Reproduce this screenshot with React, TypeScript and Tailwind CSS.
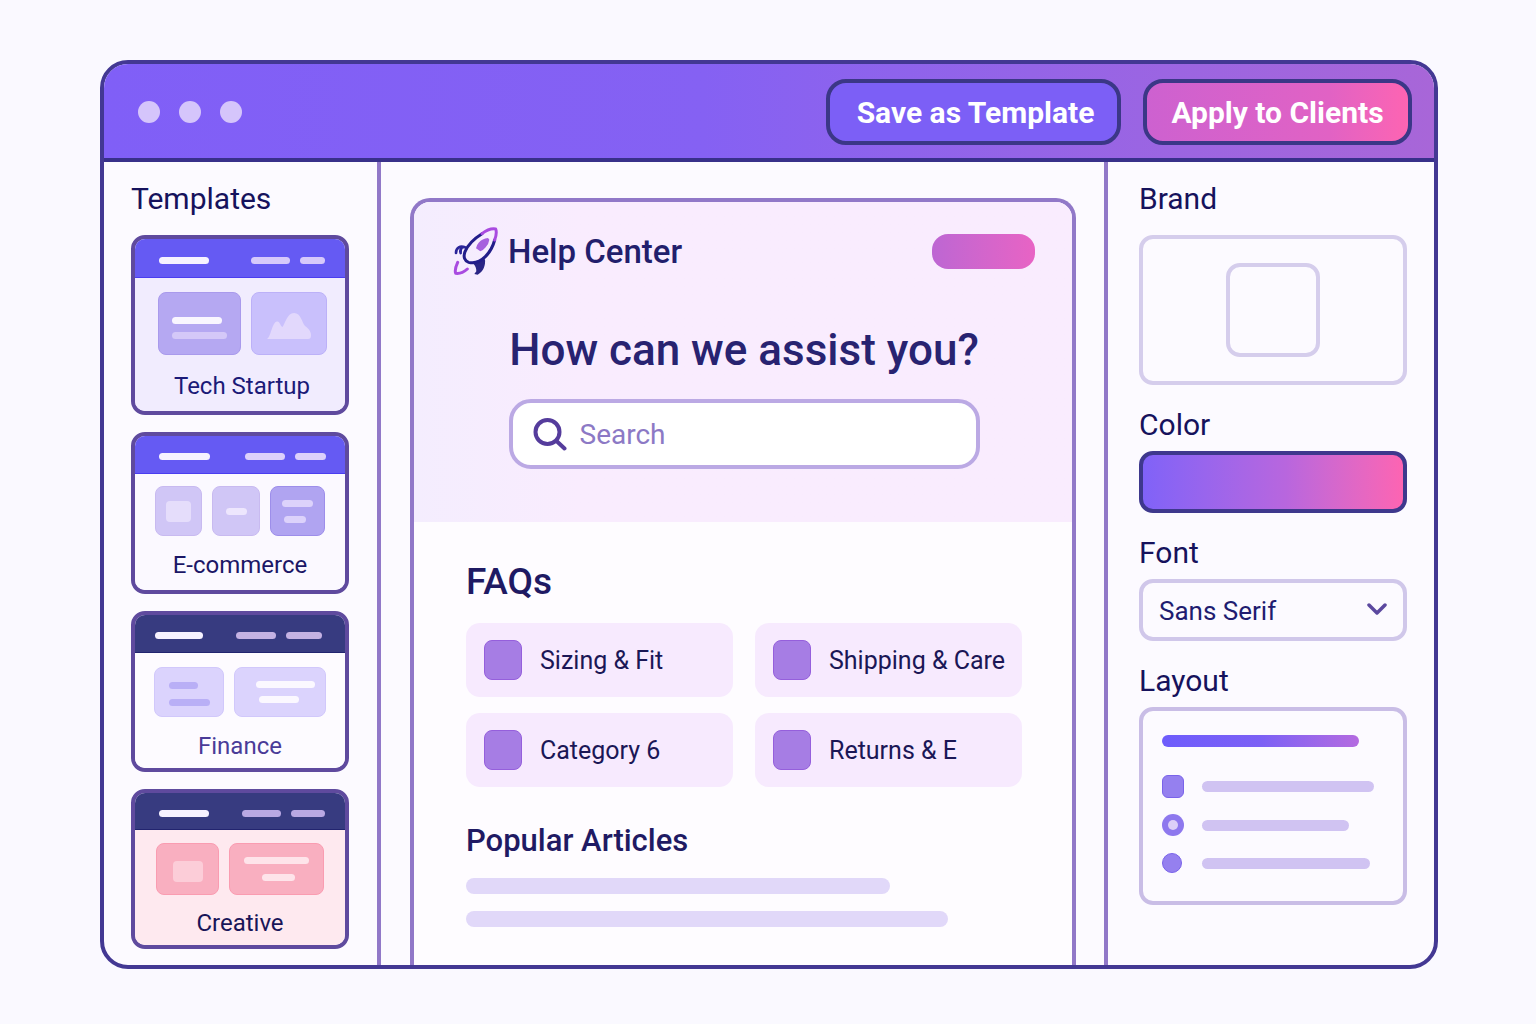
import type { ReactNode } from 'react'
import clsx from 'clsx'

interface Template {
  name: string
  header: string
  body: string
  label: string
  bars: string[]
  barColor: string
  preview: ReactNode
}

function Block({ className, children }: { className: string; children?: ReactNode }) {
  return (
    <span className={clsx('flex flex-col justify-center rounded-lg border', className)}>
      {children}
    </span>
  )
}

function Line({ className }: { className: string }) {
  return <span className={clsx('block h-[7px] rounded-full', className)} />
}

const TEMPLATES: Template[] = [
  {
    name: 'Tech Startup',
    header: 'h-[39px] bg-[#655af3] border-[#4a3df0] pl-6 pr-5',
    body: 'h-[133px] bg-[#f1ecfe] pt-[14px] pl-1',
    label: 'mt-[15px] text-[#1b1a78]',
    bars: ['w-[50px]', 'w-[39px]', 'w-[25px]'],
    barColor: 'bg-[#d6c9fb]',
    preview: (
      <>
        <Block className="h-[63px] w-[83px] gap-2 border-[#a99aec] bg-[#b5a8f2] pl-[13px] pt-2">
          <Line className="w-[50px] bg-[#f9f6ff]" />
          <Line className="w-[55px] bg-[#d4c8f8]" />
        </Block>
        <Block className="h-[63px] w-[76px] items-center border-[#bcb1f8] bg-[#c9c0fc]">
          <svg width="46" height="28" viewBox="0 0 46 28" className="mt-1">
            <path
              d="M1 27C5 25 6 10 11 9.500C14 9 14 14 16.500 15C19 12 21 1 28 1C35 1 36 11 39 14C42 16 45 19 45 23C45 26 44 27 42 27Z"
              fill="#e2d8fc"
            />
          </svg>
        </Block>
      </>
    )
  },
  {
    name: 'E-commerce',
    header: 'h-[38px] bg-[#655af3] border-[#4a3df0] pl-6 pr-[19px]',
    body: 'h-[116px] bg-[#fbf9ff] pt-3',
    label: 'mt-[13px] text-[#1b1766]',
    bars: ['w-[51px]', 'w-[40px]', 'w-[31px]'],
    barColor: 'bg-[#dcd0fb]',
    preview: (
      <>
        <Block className="h-[50px] w-[47px] items-center border-[#c8baf0] bg-[#d0c6f6]">
          <span className="h-[21px] w-[25px] rounded bg-[#e5ddfb]" />
        </Block>
        <Block className="h-[50px] w-[48px] items-center border-[#c8baf0] bg-[#d0c6f6]">
          <Line className="w-[21px] bg-[#ede6fd]" />
        </Block>
        <Block className="h-[50px] w-[55px] gap-[9px] border-[#9d8eea] bg-[#b0a4f1] pl-[11px]">
          <Line className="w-[31px] bg-[#dcd2fb]" />
          <Line className="ml-[2px] w-[22px] bg-[#dcd2fb]" />
        </Block>
      </>
    )
  },
  {
    name: 'Finance',
    header: 'h-[38px] bg-[#373b80] border-[#22246f] pl-5 pr-[23px]',
    body: 'h-[115px] bg-[#fdfbff] pt-[14px]',
    label: 'mt-[13px] text-[#4a3b98]',
    bars: ['w-[48px]', 'w-[40px]', 'w-[36px]'],
    barColor: 'bg-[#c4b2e3]',
    preview: (
      <>
        <Block className="h-[50px] w-[70px] gap-[10px] border-[#d1c8fb] bg-[#dbd3fd] pl-[14px] pt-1">
          <Line className="w-[29px] bg-[#b9aff6]" />
          <Line className="w-[41px] bg-[#b9aff6]" />
        </Block>
        <Block className="h-[50px] w-[92px] gap-2 border-[#d1c8fb] bg-[#dbd3fd] pl-[21px]">
          <Line className="w-[59px] bg-[#fbf8ff]" />
          <Line className="ml-[3px] w-[40px] bg-[#fbf8ff]" />
        </Block>
      </>
    )
  },
  {
    name: 'Creative',
    header: 'h-[37px] bg-[#373b80] border-[#22246f] pl-6 pr-5',
    body: 'h-[115px] bg-[#fee9ef] pt-[13px]',
    label: 'mt-3 text-[#191558]',
    bars: ['w-[50px]', 'w-[39px]', 'w-[34px]'],
    barColor: 'bg-[#b9a8e3]',
    preview: (
      <>
        <Block className="h-[52px] w-[63px] items-center border-[#fa9cb1] bg-[#f9afc0]">
          <span className="mt-1 h-[21px] w-[30px] rounded-sm bg-[#fccdd8]" />
        </Block>
        <Block className="h-[52px] w-[95px] items-center gap-[10px] border-[#fa9cb1] bg-[#f9afc0]">
          <Line className="w-[65px] bg-[#fee4ea]" />
          <Line className="ml-1 w-[33px] bg-[#fee4ea]" />
        </Block>
      </>
    )
  }
]

const FAQS = ['Sizing & Fit', 'Shipping & Care', 'Category 6', 'Returns & E']

function TemplateCard({ template }: { template: Template }) {
  return (
    <button
      type="button"
      className="block w-full overflow-hidden rounded-[14px] border-4 border-[#5f4a9e]"
    >
      <span className={clsx('flex items-center border-b pt-1', template.header)}>
        <Line className={clsx('mr-auto bg-[#f6f2ff]', template.bars[0])} />
        <Line className={clsx('mr-[10px]', template.bars[1], template.barColor)} />
        <Line className={clsx(template.bars[2], template.barColor)} />
      </span>
      <span className={clsx('block', template.body)}>
        <span className="flex justify-center gap-[10px]">{template.preview}</span>
        <span className={clsx('block text-[24px] leading-8', template.label)}>{template.name}</span>
      </span>
    </button>
  )
}

function RocketIcon() {
  return (
    <svg
      width="45"
      height="49"
      viewBox="159 111 135 147"
      fill="none"
      strokeWidth="9"
      strokeLinecap="round"
      strokeLinejoin="round"
    >
      <path d="M173 217C167 230 164 242 167 250C180 252 192 246 202 237" stroke="#a94be0" />
      <path d="M168 189C168 172 181 166 195 172M186 172C181 178 180 184 182 189" stroke="#2b259a" strokeWidth="8" />
      <path d="M221 222L255 207C257 226 251 244 233 254L223 252L229 244C229 235 227 229 221 222Z" fill="#2a2585" />
      <path
        d="M246 131C222 146 203 165 195 185C189 201 194 213 206 217C222 221 241 215 256 200C269 187 279 169 284 150"
        stroke="#221d8a"
      />
      <path d="M246 131C260 120 275 115 287 117C291 127 288 139 284 150" stroke="#a94be0" />
      <path
        d="M236 158Q247 146 264 144L268 149Q266 163 257 172Q249 182 241 184L228 175Q230 164 236 158Z"
        fill="#a660de"
      />
    </svg>
  )
}

function SearchIcon() {
  return (
    <svg width="34" height="34" viewBox="0 0 34 34" fill="none" stroke="#553c9c" strokeWidth="4" strokeLinecap="round">
      <circle cx="14.500" cy="14" r="12" />
      <path d="M23.500 23L31.500 30.500" />
    </svg>
  )
}

function TitleBar() {
  return (
    <header className="flex h-[98px] items-center border-b-4 border-[#38308a] bg-linear-to-r from-[#805ff7] via-[#8561f3] via-45% to-[#a866d8] pl-[34px] pr-[22px] pt-[2px]">
      <div className="mr-auto flex gap-[19px]">
        <span className="size-[22px] rounded-full bg-[#d5c5fb]" />
        <span className="size-[22px] rounded-full bg-[#d5c5fb]" />
        <span className="size-[22px] rounded-full bg-[#d5c5fb]" />
      </div>
      <div className="flex gap-[22px] text-[30px] font-bold text-white">
        <button
          type="button"
          className="h-[66px] w-[295px] rounded-[20px] border-4 border-[#3b3787] bg-[#7c5ff6] pl-1 whitespace-nowrap"
        >
          Save as Template
        </button>
        <button
          type="button"
          className="h-[66px] w-[269px] rounded-[20px] border-4 border-[#3b3787] bg-linear-to-r from-[#cd61d0] via-[#e162c4] via-70% to-[#fd64b2] whitespace-nowrap"
        >
          Apply to Clients
        </button>
      </div>
    </header>
  )
}

function HelpCenterPreview() {
  return (
    <section className="flex flex-1 flex-col overflow-hidden rounded-t-[20px] border-4 border-b-0 border-[#9178c8] bg-[#fefcff]">
      <div className="bg-linear-to-r from-[#f4edfe] via-[#f9ecfe] via-25% to-[#f9ecfe] pb-[53px] pl-[39px] pr-[37px] pt-[25px]">
        <div className="flex h-[49px] items-center">
          <RocketIcon />
          <span className="ml-[10px] text-[33px] leading-none font-medium text-[#221e6c]">Help Center</span>
          <span className="ml-auto h-[35px] w-[103px] rounded-[16px] bg-linear-to-r from-[#bd66d3] to-[#e863c4]" />
        </div>
        <div className="mx-auto mt-[46px] max-w-[471px]">
          <h1 className="text-center text-[44px] leading-[56px] font-medium whitespace-nowrap text-[#282371]">
            How can we assist you?
          </h1>
          <label className="mt-[21px] flex h-[70px] items-center gap-[13px] rounded-[22px] border-4 border-[#bba9e4] bg-white px-5 pt-[2px]">
            <SearchIcon />
            <input
              type="search"
              aria-label="Search"
              placeholder="Search"
              className="min-w-0 flex-1 bg-transparent text-[28px] text-[#282371] outline-none placeholder:text-[#8c79c5]"
            />
          </label>
        </div>
      </div>

      <div className="pl-[52px] pr-[50px] pt-[38px]">
        <h2 className="text-[37px] leading-[44px] font-medium text-[#1f1a63]">FAQs</h2>
        <div className="mt-[19px] grid grid-cols-2 gap-x-[22px] gap-y-4">
          {FAQS.map((faq) => (
            <a
              key={faq}
              href="#"
              className="flex h-[74px] items-center gap-[18px] rounded-[14px] bg-[#f7eafe] pl-[18px] text-[25px] whitespace-nowrap text-[#1b1756]"
            >
              <span className="h-10 w-[38px] shrink-0 rounded-lg border border-[#955fdc] bg-[#a67de4]" />
              <span className="pt-[2px]">{faq}</span>
            </a>
          ))}
        </div>
        <h2 className="mt-[34px] text-[31px] leading-10 font-medium text-[#1f1a63]">Popular Articles</h2>
        <div className="mt-[17px] h-4 w-[424px] max-w-full rounded-full bg-[#e1d8f9]" />
        <div className="mt-[17px] h-4 w-[482px] max-w-full rounded-full bg-[#e1d8f9]" />
      </div>
    </section>
  )
}

const HEADING = 'text-[30px] leading-9 text-[#16125c]'

function SettingsPanel() {
  return (
    <aside className="w-[330px] shrink-0 border-l-4 border-[#9178c8] pl-[31px] pr-[27px] pt-[19px]">
      <h2 className={HEADING}>Brand</h2>
      <div className="mt-[18px] flex h-[150px] items-center justify-center rounded-[14px] border-4 border-[#d5cdec]">
        <div className="size-[94px] rounded-[14px] border-4 border-[#d5cdec]" />
      </div>

      <h2 className={clsx(HEADING, 'mt-[22px]')}>Color</h2>
      <button
        type="button"
        aria-label="Color"
        className="mt-2 block h-[62px] w-full rounded-[14px] border-4 border-[#3e388d] bg-linear-to-r from-[#8062f8] via-[#b866de] via-55% to-[#fd64b2]"
      />

      <label htmlFor="font" className={clsx(HEADING, 'mt-[22px] block')}>
        Font
      </label>
      <div className="relative mt-2">
        <select
          id="font"
          className="h-[62px] w-full appearance-none rounded-[14px] border-4 border-[#d0c7ea] bg-transparent px-4 pt-[2px] text-[26px] text-[#211c70]"
        >
          <option>Sans Serif</option>
        </select>
        <svg
          width="20"
          height="13"
          viewBox="0 0 20 13"
          fill="none"
          stroke="#5b489f"
          strokeWidth="3.500"
          strokeLinecap="round"
          strokeLinejoin="round"
          className="pointer-events-none absolute right-5 top-6"
        >
          <path d="M2 2l8 8 8-8" />
        </svg>
      </div>

      <h2 className={clsx(HEADING, 'mt-[22px]')}>Layout</h2>
      <div className="mt-2 h-[198px] rounded-[14px] border-4 border-[#c9bde6] pl-[19px] pr-[26px] pt-6">
        <div className="h-3 w-[197px] rounded-full bg-linear-to-r from-[#6e5cfc] via-[#7c60f5] via-50% to-[#b46ae0]" />
        <ul className="mt-[28px] flex flex-col gap-4">
          <li className="flex h-[23px] items-center gap-[18px]">
            <span className="h-[23px] w-[22px] rounded-md border border-[#7a63ea] bg-[#9580ef]" />
            <span className="h-[11px] w-[172px] rounded-full bg-[#d0c3f2]" />
          </li>
          <li className="flex h-[22px] items-center gap-[18px]">
            <span className="flex size-[22px] items-center justify-center rounded-full bg-[#8e78ee]">
              <span className="size-[10px] rounded-full bg-[#dccff8]" />
            </span>
            <span className="h-[11px] w-[147px] rounded-full bg-[#d0c3f2]" />
          </li>
          <li className="flex h-[22px] items-center gap-[20px]">
            <span className="size-[20px] rounded-full border border-[#7a63ea] bg-[#9580ef]" />
            <span className="h-[11px] w-[168px] rounded-full bg-[#d0c3f2]" />
          </li>
        </ul>
      </div>
    </aside>
  )
}

export default function App() {
  return (
    <div className="flex min-h-screen flex-col bg-[#faf9ff] pb-[55px] pl-[100px] pr-[98px] pt-[60px] font-['Roboto',sans-serif]">
      <div className="flex flex-1 flex-col overflow-hidden rounded-[28px] border-4 border-[#433893] bg-[#fcfaff]">
        <TitleBar />
        <div className="flex flex-1">
          <aside className="w-[277px] shrink-0 border-r-4 border-[#9178c8] pl-[27px] pr-7 pt-[19px]">
            <h2 className={HEADING}>Templates</h2>
            <div className="mt-[18px] flex flex-col gap-[17px]">
              {TEMPLATES.map((template) => (
                <TemplateCard key={template.name} template={template} />
              ))}
            </div>
          </aside>
          <main className="flex min-w-0 flex-1 flex-col pl-[29px] pr-7 pt-9">
            <HelpCenterPreview />
          </main>
          <SettingsPanel />
        </div>
      </div>
    </div>
  )
}
